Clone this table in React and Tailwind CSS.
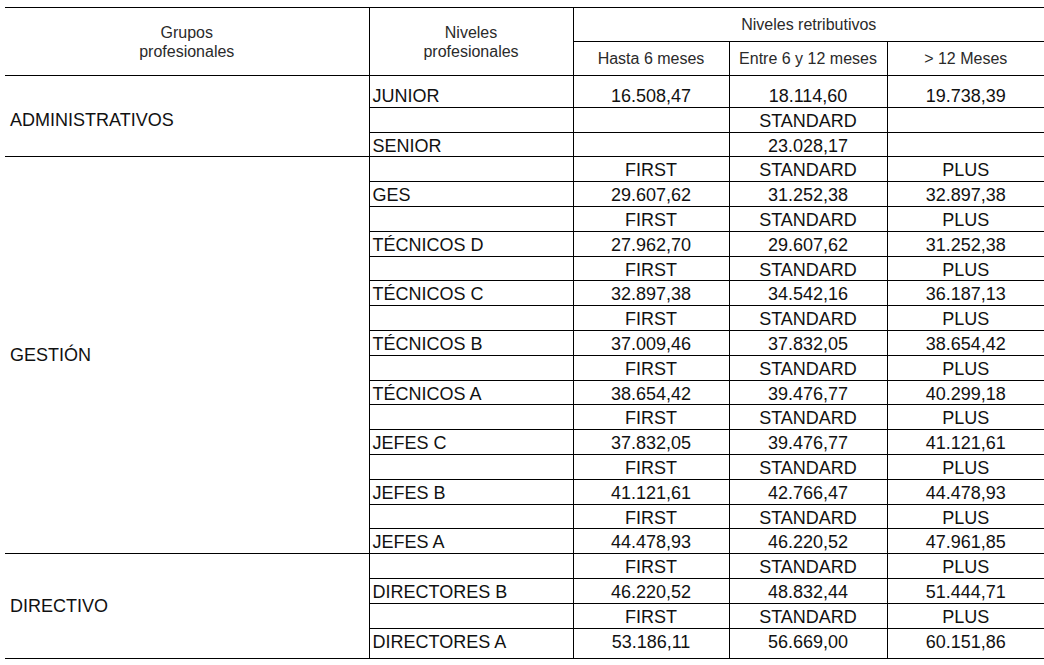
const admin = [
  { nivel: "JUNIOR", vals: ["16.508,47", "18.114,60", "19.738,39"] },
  { nivel: "", vals: ["", "STANDARD", ""] },
  { nivel: "SENIOR", vals: ["", "23.028,17", ""] },
];

const gestion = [
  ["GES", "29.607,62", "31.252,38", "32.897,38"],
  ["TÉCNICOS D", "27.962,70", "29.607,62", "31.252,38"],
  ["TÉCNICOS C", "32.897,38", "34.542,16", "36.187,13"],
  ["TÉCNICOS B", "37.009,46", "37.832,05", "38.654,42"],
  ["TÉCNICOS A", "38.654,42", "39.476,77", "40.299,18"],
  ["JEFES C", "37.832,05", "39.476,77", "41.121,61"],
  ["JEFES B", "41.121,61", "42.766,47", "44.478,93"],
  ["JEFES A", "44.478,93", "46.220,52", "47.961,85"],
];

const directivo = [
  ["DIRECTORES B", "46.220,52", "48.832,44", "51.444,71"],
  ["DIRECTORES A", "53.186,11", "56.669,00", "60.151,86"],
];

// turn [nivel, a, b, c] pairs into a FIRST/STANDARD/PLUS row + the level row
const expand = (list) =>
  list.flatMap(([nivel, a, b, c]) => [
    { nivel: "", vals: ["FIRST", "STANDARD", "PLUS"] },
    { nivel, vals: [a, b, c] },
  ]);

const groups = [
  { name: "ADMINISTRATIVOS", rows: admin, labelPad: "pt-[9px]" },
  { name: "GESTIÓN", rows: expand(gestion), labelPad: "" },
  { name: "DIRECTIVO", rows: expand(directivo), labelPad: "" },
];

const cell = "px-0 pb-0 border-b border-black leading-[19.8px]";

export default function App() {
  const total = groups.reduce((n, g) => n + g.rows.length, 0);
  let idx = 0;
  return (
    <div className="bg-white w-[1044px] h-[665px] overflow-hidden font-['Liberation_Sans',Arial,sans-serif] text-[#111]">
      <table className="ml-[5px] mt-[7px] w-[1039px] border-collapse table-fixed">
        <colgroup>
          <col className="w-[364px]" />
          <col className="w-[204px]" />
          <col className="w-[156px]" />
          <col className="w-[158px]" />
          <col className="w-[157px]" />
        </colgroup>
        <thead className="text-[16px] leading-[19px] text-[#2a2a2a] font-normal">
          <tr className="h-[34px]">
            <th rowSpan={2} className="p-0 font-normal border-t border-b border-r border-black">
              Grupos
              <br />
              profesionales
            </th>
            <th rowSpan={2} className="p-0 font-normal border-t border-b border-r border-black">
              Niveles
              <br />
              profesionales
            </th>
            <th colSpan={3} className="p-0 font-normal border-t border-b border-black">
              Niveles retributivos
            </th>
          </tr>
          <tr className="h-[34px]">
            <th className="p-0 font-normal border-b border-r border-black">Hasta 6 meses</th>
            <th className="p-0 font-normal border-b border-r border-black">Entre 6 y 12 meses</th>
            <th className="p-0 font-normal border-b border-black">&gt; 12 Meses</th>
          </tr>
        </thead>
        <tbody className="text-[18px]">
          {groups.map((g) =>
            g.rows.map((r, i) => {
              const first = idx === 0;
              const last = idx === total - 1;
              idx++;
              const extra = first ? "pt-[11px] align-bottom" : last ? "pt-[4px] !pb-[6px] align-top" : "pt-[4px]";
              return (
                <tr key={g.name + i}>
                  {i === 0 && (
                    <td
                      rowSpan={g.rows.length}
                      className={`p-0 pl-[5px] border-b border-r border-black text-left align-middle ${g.labelPad}`}
                    >
                      {g.name}
                    </td>
                  )}
                  <td className={`${cell} ${extra} border-r pl-[3px] text-left whitespace-nowrap`}>{r.nivel}</td>
                  {r.vals.map((v, j) => (
                    <td key={j} className={`${cell} ${extra} text-center ${j < 2 ? "border-r" : ""}`}>
                      {v}
                    </td>
                  ))}
                </tr>
              );
            })
          )}
        </tbody>
      </table>
    </div>
  );
}
